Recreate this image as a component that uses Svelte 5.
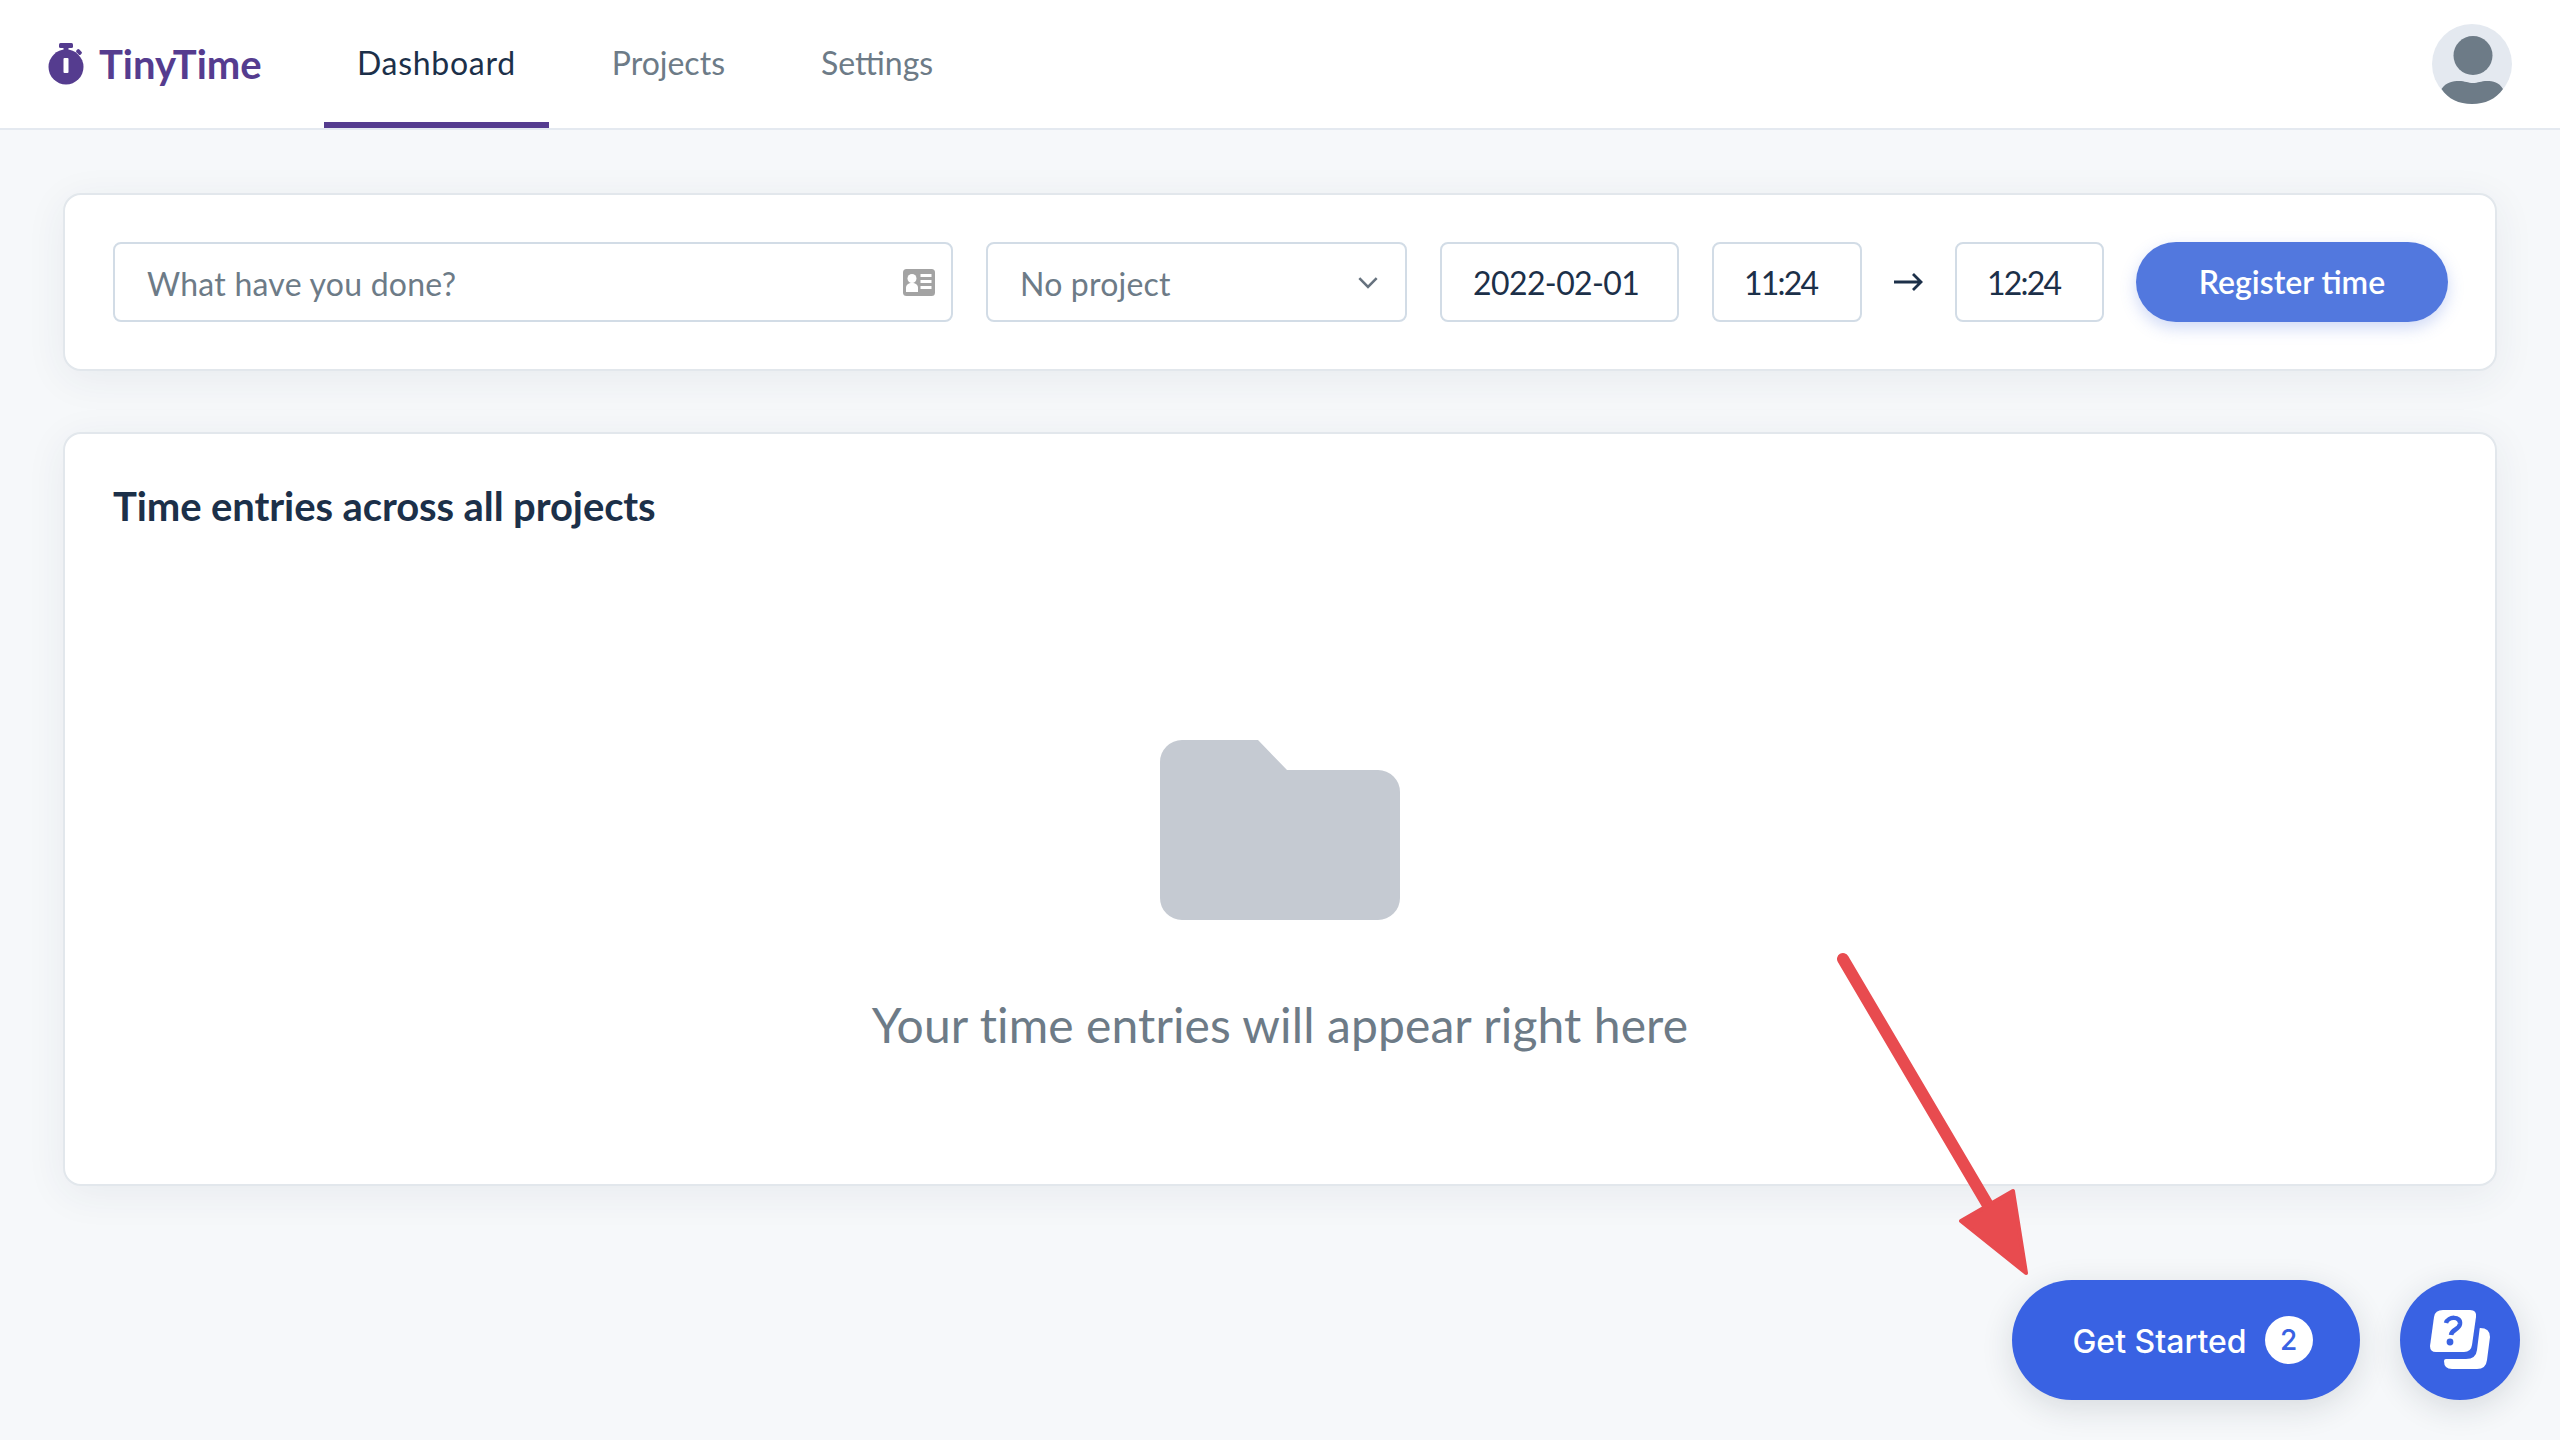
<script lang="ts">
  let description = $state("");
  let date = $state("2022-02-01");
  let startTime = $state("11:24");
  let endTime = $state("12:24");
  const tabs = ["Dashboard", "Projects", "Settings"];
  let active = $state("Dashboard");
</script>

<div class="page">
  <header class="topbar">
    <div class="brand">
      <svg class="brand-icon" viewBox="0 0 36 42" aria-hidden="true">
        <rect x="11" y="0" width="14" height="5" rx="1.5" fill="#553c8f" />
        <rect x="15.5" y="4" width="5" height="5" fill="#553c8f" />
        <rect x="28" y="7" width="6" height="4" rx="1.5" transform="rotate(45 31 9)" fill="#553c8f" />
        <circle cx="18" cy="24" r="17.5" fill="#553c8f" />
        <rect x="15.5" y="15" width="5" height="15" rx="1" fill="#fff" />
      </svg>
      <span class="brand-name">TinyTime</span>
    </div>
    <nav class="tabs">
      {#each tabs as tab}
        <button class="tab" class:active={active === tab} onclick={() => (active = tab)}>{tab}</button>
      {/each}
    </nav>
    <div class="avatar">
      <svg viewBox="0 0 80 80" aria-hidden="true">
        <circle cx="40" cy="40" r="40" fill="#e4e9f0" />
        <circle cx="41" cy="31.5" r="19.5" fill="#6d7b87" />
        <path d="M9.5 65 C14 58 21 57 27 57 C33 57 36 59 41 59 C46 59 49 57 55 57 C61 57 67 58 71 65 C64 75 53 80 40 80 C27 80 16 75 9.5 65 Z" fill="#6d7b87" />
      </svg>
    </div>
  </header>

  <main class="content">
    <section class="card entry-form">
      <div class="field description">
        <input placeholder="What have you done?" bind:value={description} />
        <svg class="field-icon" viewBox="0 0 32 27" aria-hidden="true">
          <rect width="32" height="27" rx="3.5" fill="#a3a3a3" />
          <circle cx="9" cy="9.500" r="4.500" fill="#fff" />
          <path d="M3 23 V19 C3 15.500 5.500 14 9 14 C12.500 14 15 15.500 15 19 V23 Z" fill="#fff" />
          <rect x="17.500" y="5" width="11" height="3" fill="#fff" />
          <rect x="17.500" y="11" width="11" height="3" fill="#fff" />
          <rect x="17.500" y="17" width="11" height="3" fill="#fff" />
        </svg>
      </div>
      <div class="field project">
        <span class="placeholder">No project</span>
        <svg class="chevron" viewBox="0 0 20 12" aria-hidden="true">
          <path d="M2 2 L10 10 L18 2" fill="none" stroke="#66727e" stroke-width="2.4" />
        </svg>
      </div>
      <input class="field date" bind:value={date} />
      <input class="field time" bind:value={startTime} />
      <svg class="arrow" viewBox="0 0 30 20" aria-hidden="true">
        <path d="M1 10 H28 M20 2 L28 10 L20 18" fill="none" stroke="#1c3049" stroke-width="2.8" />
      </svg>
      <input class="field time end" bind:value={endTime} />
      <button class="register">Register time</button>
    </section>

    <section class="card entries">
      <h2>Time entries across all projects</h2>
      <div class="empty">
        <svg class="folder" viewBox="0 0 240 180" aria-hidden="true">
          <path d="M22 0 H98 L127 30 H218 A22 22 0 0 1 240 52 V158 A22 22 0 0 1 218 180 H22 A22 22 0 0 1 0 158 V22 A22 22 0 0 1 22 0 Z" fill="#c5cad2" />
        </svg>
        <p>Your time entries will appear right here</p>
      </div>
    </section>
  </main>

  <svg class="annotation" viewBox="0 0 240 350" aria-hidden="true">
    <path d="M23 19 L172 272" stroke="#e84b4f" stroke-width="12" stroke-linecap="round" fill="none" />
    <path d="M141 281 L193 251 L206 333 Z" fill="#e84b4f" stroke="#e84b4f" stroke-width="4" stroke-linejoin="round" />
  </svg>

  <div class="launcher">
    <button class="get-started">Get Started <span class="count">2</span></button>
    <button class="help" aria-label="Help">
      <svg viewBox="0 0 60 60" aria-hidden="true">
        <path d="M13 0 H40 Q47 0 46 7 L42 35 Q41 42 34 42 H6 Q0 42 0 36 L4 7 Q5 0 13 0 Z" fill="#fff" />
        <path d="M16 13 C18 6 31 6 30 14 C29 20 22 19 21 25" fill="none" stroke="#3962e3" stroke-width="4.500" />
        <circle cx="20" cy="32" r="3.400" fill="#3962e3" />
        <path d="M50 18 Q60 18 60 27 L57 50 Q56 59 47 59 H22 Q14 59 14 51 Q14 49 16 49 H36 Q46 49 47 40 L49.500 20 Q49.500 18 50 18 Z" fill="#fff" />
      </svg>
    </button>
  </div>
</div>

<style>
  :global(body) {
    margin: 0;
    background: #f6f8fa;
  }

  .page {
    position: relative;
    height: 1440px;
    overflow: hidden;
    font-family: Lato, "Open Sans", sans-serif;
    color: #1c3049;
  }

  .topbar {
    height: 128px;
    display: flex;
    align-items: stretch;
    padding: 0 34px 0 48px;
    background: #fff;
    border-bottom: 2px solid #e4e9f0;
  }

  .brand {
    display: flex;
    align-items: center;
    gap: 15px;
    width: 276px;
  }

  .brand-icon {
    width: 36px;
    height: 42px;
  }

  .brand-name {
    font-size: 40px;
    font-weight: 700;
    color: #553c8f;
  }

  .tabs {
    display: flex;
    flex: 1;
    gap: 30px;
  }

  .tab {
    padding: 2px 33px 0;
    border: none;
    border-bottom: 6px solid transparent;
    background: none;
    font: inherit;
    font-size: 32px;
    color: #6d7b87;
    cursor: pointer;
  }

  .tab.active {
    letter-spacing: 0.7px;
    color: #1c3049;
    border-bottom-color: #553c8f;
  }

  .avatar {
    align-self: center;
    width: 80px;
    height: 80px;
    margin-right: 14px;
  }

  .avatar svg {
    display: block;
  }

  .content {
    display: flex;
    flex-direction: column;
    gap: 61px;
    padding: 63px 63px 0;
  }

  .card {
    background: #fff;
    border-radius: 18px;
    border: 2px solid #e2e7ec;
    box-shadow: 0 8px 40px rgba(40, 60, 90, 0.07);
    box-sizing: border-box;
  }

  .entry-form {
    height: 178px;
    display: flex;
    align-items: center;
    padding: 0 47px 0 48px;
  }

  .field {
    box-sizing: border-box;
    height: 80px;
    border: 2px solid #d2dce6;
    border-radius: 8px;
    background: #fff;
    font: inherit;
    font-size: 32px;
    color: #1c3049;
    outline: none;
  }

  .description {
    width: 840px;
    margin-right: 33px;
    display: flex;
    align-items: center;
    padding: 0 16px 0 32px;
  }

  .description input {
    flex: 1;
    min-width: 0;
    border: none;
    outline: none;
    padding: 2px 0 0;
    font: inherit;
    letter-spacing: 0.25px;
    color: inherit;
  }

  .description input::placeholder,
  .placeholder {
    color: #6d7b87;
    opacity: 1;
  }

  .placeholder {
    padding-top: 2px;
    letter-spacing: 0.2px;
  }

  .field-icon {
    width: 32px;
    height: 27px;
  }

  .project {
    width: 421px;
    margin-right: 33px;
    display: flex;
    align-items: center;
    justify-content: space-between;
    padding: 0 26px 0 32px;
  }

  .chevron {
    width: 22px;
    height: 13px;
  }

  .date {
    width: 239px;
    margin-right: 33px;
    padding: 0 0 0 31px;
    letter-spacing: -0.6px;
  }

  .time {
    width: 150px;
    padding: 0 0 0 30px;
    letter-spacing: -1.8px;
  }

  .time.end {
    width: 149px;
  }

  .arrow {
    width: 30px;
    height: 20px;
    margin: 0 32px 0 31px;
  }

  .register {
    width: 312px;
    height: 80px;
    margin-left: 32px;
    padding: 0 0 2px;
    border: none;
    border-radius: 40px;
    background: #5278de;
    color: #fff;
    font: inherit;
    font-size: 32px;
    font-weight: 600;
    box-shadow: 0 6px 16px rgba(82, 120, 222, 0.28);
    cursor: pointer;
  }

  .entries {
    height: 754px;
    padding: 47px 48px;
  }

  h2 {
    margin: 0;
    font-size: 40px;
    line-height: 50px;
    font-weight: 700;
    letter-spacing: -0.1px;
  }

  .empty {
    display: flex;
    flex-direction: column;
    align-items: center;
    margin-top: 209px;
  }

  .folder {
    width: 240px;
    height: 180px;
  }

  .empty p {
    margin: 75px 0 0;
    font-size: 48px;
    line-height: 60px;
    letter-spacing: 0.1px;
    color: #6d7b87;
  }

  .annotation {
    position: absolute;
    left: 1820px;
    top: 940px;
    width: 240px;
    height: 350px;
  }

  .launcher {
    position: absolute;
    right: 40px;
    bottom: 40px;
    display: flex;
    gap: 40px;
  }

  .launcher button {
    height: 120px;
    border: none;
    background: #3962e3;
    color: #fff;
    cursor: pointer;
    box-shadow: 0 8px 32px rgba(30, 40, 60, 0.14);
  }

  .get-started {
    width: 348px;
    padding: 2px 0 0 13px;
    border-radius: 60px;
    font-family: Inter, sans-serif;
    font-size: 32px;
    font-weight: 500;
    display: flex;
    align-items: center;
    justify-content: center;
    gap: 18px;
  }

  .count {
    width: 48px;
    height: 48px;
    margin-top: -2px;
    border-radius: 50%;
    background: #fff;
    color: #3962e3;
    font-size: 28px;
    display: flex;
    align-items: center;
    justify-content: center;
  }

  .help {
    width: 120px;
    border-radius: 50%;
    display: flex;
    align-items: center;
    justify-content: center;
    padding: 0;
  }

  .help svg {
    width: 60px;
    height: 60px;
    overflow: visible;
  }
</style>
